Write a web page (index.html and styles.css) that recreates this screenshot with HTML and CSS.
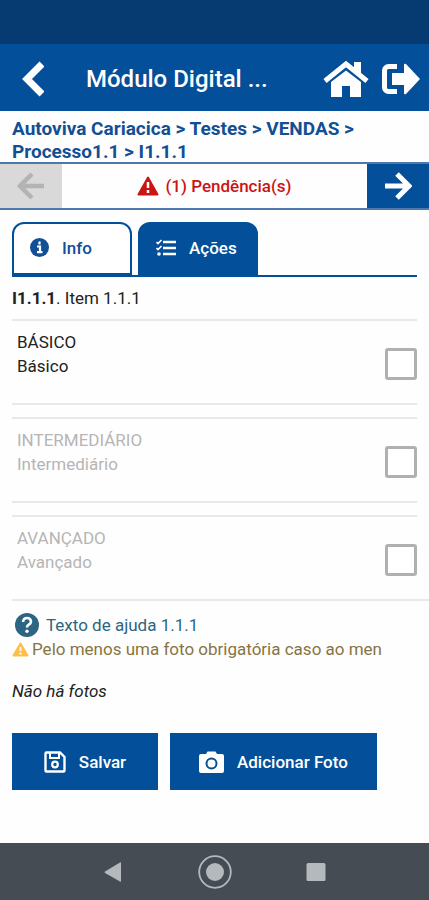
FILE: index.html
```html
<!DOCTYPE html>
<html lang="pt-BR">
<head>
  <meta charset="UTF-8" />
  <meta name="viewport" content="width=device-width, initial-scale=1" />
  <title>Módulo Digital</title>
  <link rel="stylesheet" href="styles.css">
</head>
<body>

  <div class="status-bar"></div>

  <!-- Header -->
  <header class="header">
    <button type="button" class="icon-btn" aria-label="Voltar">
      <svg width="22" height="36" viewBox="0 0 22 36"><path d="M20 3 5 18l15 15" fill="none" stroke="currentColor" stroke-width="7"/></svg>
    </button>
    <h1 class="title">Módulo Digital ...</h1>
    <button type="button" class="icon-btn" aria-label="Início">
      <svg width="46" height="38" viewBox="0 0 46 38">
        <path d="M2 21 23 4l21 17" fill="none" stroke="currentColor" stroke-width="5"/>
        <path d="M31 2h7v13l-7-6zM23 10.500 38 22v15H27V26h-8v11H8V22z" fill="currentColor"/>
      </svg>
    </button>
    <button type="button" class="icon-btn" aria-label="Sair">
      <svg width="40" height="32" viewBox="0 0 40 32">
        <path d="M16 3.500H7.500a4 4 0 0 0-4 4v17a4 4 0 0 0 4 4H16" fill="none" stroke="currentColor" stroke-width="5"/>
        <path d="M11 10h12V2q0-2 2-1l14 15-14 15q-2 1-2-1v-8H11z" fill="currentColor"/>
      </svg>
    </button>
  </header>

  <p class="breadcrumb">Autoviva Cariacica &gt; Testes &gt; VENDAS &gt; Processo1.1 &gt; I1.1.1</p>

  <!-- Previous / next item -->
  <div class="pager">
    <button type="button" class="pager-btn" aria-label="Anterior" disabled>
      <svg width="28" height="28" viewBox="0 0 28 28"><path d="M27 14H4M15 2 3 14l12 12" fill="none" stroke="currentColor" stroke-width="4.500"/></svg>
    </button>
    <div class="pending">
      <svg width="22" height="20" viewBox="0 0 22 20">
        <path d="M11 1.500 20.500 18.500h-19z" fill="currentColor" stroke="currentColor" stroke-width="2" stroke-linejoin="round"/>
        <path d="M11 6v6M11 14v3" stroke="#fff" stroke-width="2.500"/>
      </svg>
      <span>(1) Pendência(s)</span>
    </div>
    <button type="button" class="pager-btn next" aria-label="Próximo">
      <svg width="28" height="28" viewBox="0 0 28 28"><path d="M1 14h23M13 2l12 12-12 12" fill="none" stroke="currentColor" stroke-width="5"/></svg>
    </button>
  </div>

  <main class="content">
    <!-- Tabs -->
    <div class="tabs">
      <button type="button" class="tab">
        <svg width="19" height="19" viewBox="0 0 19 19">
          <circle cx="9.500" cy="9.500" r="9.500" fill="currentColor"/>
          <path d="M9.500 3.500v3M7 8.500h3v5M7 14.200h5.500" fill="none" stroke="#fff" stroke-width="2.200"/>
        </svg>
        Info
      </button>
      <button type="button" class="tab active">
        <svg width="20" height="18" viewBox="0 0 20 18">
          <path d="M7 3h13M7 9h13M7 15h13" stroke="currentColor" stroke-width="2.600"/>
          <path d="m.5 3 1.500 1.500L5.500 1M.5 9 2 10.500 5.500 7" fill="none" stroke="currentColor" stroke-width="1.600"/>
          <circle cx="3" cy="15" r="1.800" fill="currentColor"/>
        </svg>
        Ações
      </button>
    </div>

    <p class="item-title"><strong>I1.1.1</strong>. Item 1.1.1</p>

    <!-- Levels -->
    <div class="level">
      <label for="basico">BÁSICO<br>Básico</label>
      <input type="checkbox" id="basico">
    </div>
    <div class="level disabled">
      <label for="intermediario">INTERMEDIÁRIO<br>Intermediário</label>
      <input type="checkbox" id="intermediario" disabled>
    </div>
    <div class="level disabled last">
      <label for="avancado">AVANÇADO<br>Avançado</label>
      <input type="checkbox" id="avancado" disabled>
    </div>

    <!-- Help and warnings -->
    <p class="note help">
      <svg width="24" height="24" viewBox="0 0 24 24">
        <circle cx="12" cy="12" r="12" fill="currentColor"/>
        <path d="M8 9q.5-4 4-4t4 3.500q0 2-2 3t-2 3" fill="none" stroke="#fff" stroke-width="2.600"/>
        <circle cx="12" cy="18.300" r="1.700" fill="#fff"/>
      </svg>
      Texto de ajuda 1.1.1
    </p>
    <p class="note warning">
      <svg width="17" height="15" viewBox="0 0 17 15">
        <path d="M8.500 1.500 15.500 13.500h-14z" fill="#ffbf47" stroke="#ffbf47" stroke-width="2" stroke-linejoin="round"/>
        <path d="M8.500 5v4M8.500 10.500v2" stroke="#fff" stroke-width="1.800"/>
      </svg>
      Pelo menos uma foto obrigatória caso ao men
    </p>

    <p class="no-photos">Não há fotos</p>

    <div class="actions">
      <button type="button" class="btn">
        <svg width="22" height="22" viewBox="0 0 22 22" fill="none" stroke="currentColor">
          <path d="M2.500 1.500H16L20.500 6v13.500q0 1-1 1h-17q-1 0-1-1v-17q0-1 1-1z" stroke-width="2.400"/>
          <path d="M6 2v5h9V2" stroke-width="2"/>
          <circle cx="11" cy="13.500" r="2.800" stroke-width="2.200"/>
        </svg>
        Salvar
      </button>
      <button type="button" class="btn">
        <svg width="25" height="22" viewBox="0 0 25 22">
          <path d="M2 3h5l1.500-2.500h8L18 3h5q2 0 2 2v15q0 2-2 2H2q-2 0-2-2V5q0-2 2-2z" fill="currentColor"/>
          <circle cx="12.500" cy="12.500" r="5" fill="none" stroke="#034f99" stroke-width="2"/>
        </svg>
        Adicionar Foto
      </button>
    </div>
  </main>

  <!-- Android navigation -->
  <nav class="system-nav">
    <button type="button" class="icon-btn" aria-label="Voltar">
      <svg width="34" height="34" viewBox="0 0 34 34"><path d="M24 8v18q0 1-1 .5L8 18q-1-.7 0-1.400L23 7.500q1-.5 1 .5z" fill="currentColor"/></svg>
    </button>
    <button type="button" class="icon-btn" aria-label="Tela inicial">
      <svg width="34" height="34" viewBox="0 0 34 34">
        <circle cx="17" cy="17" r="15.800" fill="none" stroke="currentColor" stroke-width="1.800"/>
        <circle cx="17" cy="17" r="9" fill="currentColor"/>
      </svg>
    </button>
    <button type="button" class="icon-btn" aria-label="Recentes">
      <svg width="34" height="34" viewBox="0 0 34 34"><rect x="7.500" y="8" width="19" height="18" rx="1.500" fill="currentColor"/></svg>
    </button>
  </nav>

</body>
</html>
```
FILE: styles.css
```css
/* Basic Reset */
* {
  box-sizing: border-box;
}

body {
  font-family: Roboto, Arial, sans-serif;
  font-size: 17px;
  line-height: 24px;
  margin: 0;
  min-height: 100vh;
  background: #fefefe;
  color: #222;
  display: flex;
  flex-direction: column;
}

p,
h1 {
  margin: 0;
}

button {
  font: inherit;
  border: none;
  padding: 0;
  cursor: pointer;
}

svg {
  display: block;
  flex: none;
}

/* Header */
.status-bar {
  height: 44px;
  background: #053b70;
}

.header {
  display: flex;
  align-items: center;
  gap: 12px;
  height: 67px;
  padding: 2px 8px 0 22px;
  background: #034f99;
  color: white;
}

.icon-btn {
  background: none;
  color: inherit;
}

.title {
  flex: 1;
  padding-left: 30px;
  font-size: 24px;
  font-weight: 500;
  white-space: nowrap;
}

.breadcrumb {
  padding: 6px 12px 0;
  color: #124f94;
  font-size: 19px;
  font-weight: bold;
  line-height: 23px;
}

/* Pager */
.pager {
  display: flex;
  height: 48px;
  margin-top: -1px;
  border-top: 2px solid #4b78ad;
  border-bottom: 2px solid #4b78ad;
}

.pager-btn {
  display: flex;
  align-items: center;
  justify-content: center;
  width: 62px;
  background: #d9d9d9;
  color: #b3b3b3;
}

.pager-btn.next {
  background: #034f99;
  color: white;
}

.pending {
  flex: 1;
  display: flex;
  align-items: center;
  justify-content: center;
  gap: 6px;
  color: #cb1414;
  font-weight: 500;
}

/* Content */
.content {
  flex: 1;
  padding: 12px 12px 0;
}

.tabs {
  display: flex;
  gap: 6px;
  border-bottom: 2px solid #034f99;
}

.tab {
  display: flex;
  align-items: center;
  gap: 13px;
  width: 120px;
  height: 53px;
  padding: 0 0 2px 16px;
  border: 2px solid #034f99;
  border-radius: 12px 12px 0 0;
  background: white;
  color: #124f94;
  font-weight: 500;
}

.tab.active {
  background: #034f99;
  color: white;
}

.item-title {
  padding: 9px 0;
}

/* Levels */
.level {
  display: flex;
  justify-content: space-between;
  height: 86px;
  margin-bottom: 12px;
  padding: 9px 0 0 5px;
  border-top: 2px solid #e8e8e8;
  border-bottom: 2px solid #e8e8e8;
}

.level.disabled {
  color: #b5b5b5;
}

.level input {
  appearance: none;
  width: 32px;
  height: 32px;
  margin: 18px 0 0;
  border: 3px solid #b0b0b0;
  border-radius: 3px;
  background: white;
}

/* the last divider runs to the edge of the screen */
.level.last {
  position: relative;
  border-bottom: none;
}

.level.last::after {
  content: "";
  position: absolute;
  left: 0;
  right: -12px;
  bottom: 0;
  height: 2px;
  background: #e8e8e8;
}

/* Notes */
.note {
  display: flex;
  align-items: center;
}

.help {
  gap: 7px;
  padding-left: 3px;
  color: #2d6582;
}

.warning {
  gap: 3px;
  color: #877443;
  white-space: nowrap;
}

.no-photos {
  margin-top: 18px;
  font-style: italic;
}

.actions {
  display: flex;
  gap: 12px;
  margin-top: 30px;
}

.btn {
  display: flex;
  align-items: center;
  justify-content: center;
  gap: 13px;
  min-width: 146px;
  height: 57px;
  padding: 0 29px;
  background: #034f99;
  color: white;
  font-weight: 500;
}

/* System navigation */
.system-nav {
  display: flex;
  align-items: center;
  justify-content: center;
  gap: 67px;
  height: 57px;
  background: #454c53;
  color: #b3b9bc;
}
```
